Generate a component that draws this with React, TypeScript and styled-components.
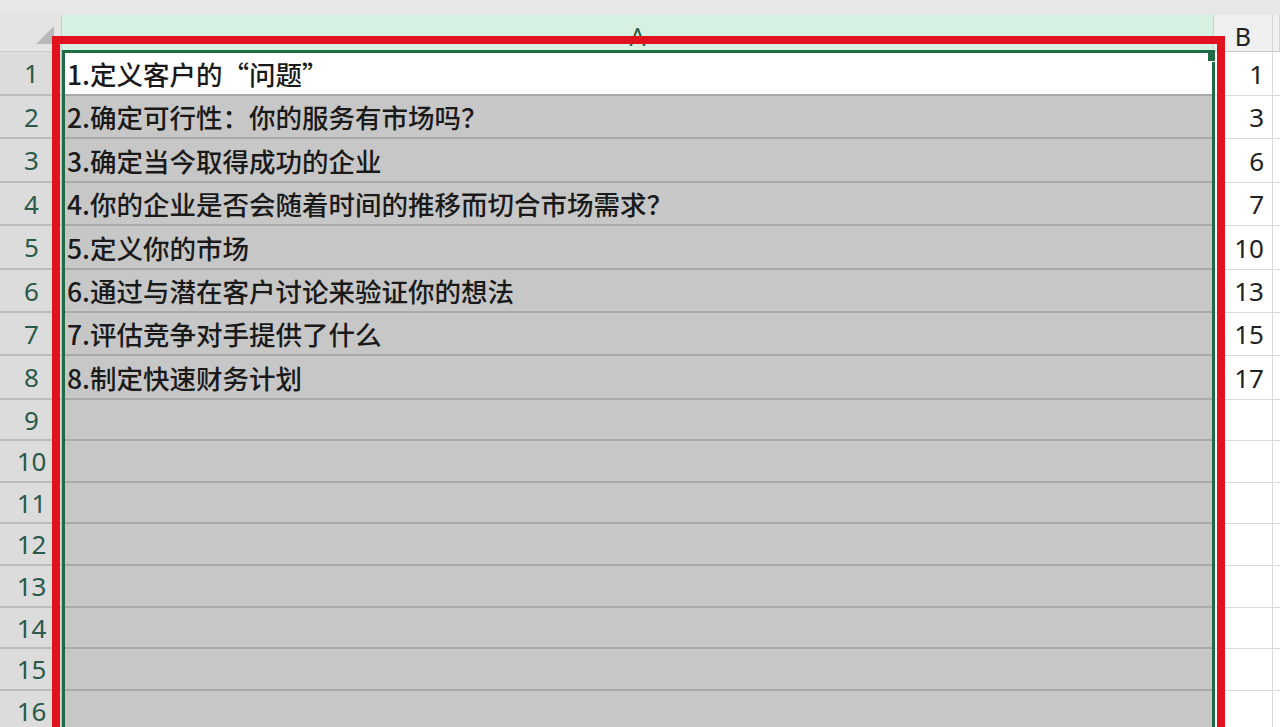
import React from "react";
import styled, { createGlobalStyle } from "styled-components";

const GlobalStyle = createGlobalStyle`
  html, body {
    margin: 0;
    padding: 0;
    background: #f2f2f2;
    overflow: hidden;
  }
  * {
    box-sizing: border-box;
  }
`;

const items = [
  "1.定义客户的“问题”",
  "2.确定可行性：你的服务有市场吗？",
  "3.确定当今取得成功的企业",
  "4.你的企业是否会随着时间的推移而切合市场需求？",
  "5.定义你的市场",
  "6.通过与潜在客户讨论来验证你的想法",
  "7.评估竞争对手提供了什么",
  "8.制定快速财务计划",
];

const pages = ["1", "3", "6", "7", "10", "13", "15", "17"];

const rowHeights = [44, 43, 44, 43, 44, 43, 43, 44, 41, 42, 41, 42, 42, 41, 42, 42];

const Sheet = styled.div`
  position: relative;
  width: 1280px;
  height: 727px;
  overflow: hidden;
  font-family: "Noto Sans", "Noto Sans CJK SC", sans-serif;
`;

const TopStrip = styled.div`
  height: 15px;
  background: #e7e7e7;
`;

const Grid = styled.div`
  display: grid;
  grid-template-columns: 62px 1152px 59px 1fr;
  grid-template-rows: 37px;
  grid-auto-rows: auto;
`;

const Corner = styled.div`
  position: relative;
  background: #e4e4e4;
  border-right: 1px solid #c9c9c9;
  border-bottom: 1px solid #c9c9c9;
`;

const CornerMark = styled.div`
  position: absolute;
  right: 7px;
  bottom: 7px;
  width: 0;
  height: 0;
  border-left: 18px solid transparent;
  border-bottom: 18px solid #b9b9b9;
`;

const ColHead = styled.div<{ $active?: boolean }>`
  display: flex;
  align-items: center;
  justify-content: center;
  background: ${(p) => (p.$active ? "#d6f0e1" : "#f0f0f0")};
  color: ${(p) => (p.$active ? "#1f5b40" : "#222222")};
  border-right: 1px solid ${(p) => (p.$active ? "#c4d6cb" : "#d4d4d4")};
  border-bottom: 1px solid #c9c9c9;
  font-size: 25px;
  padding-top: 6px;
`;

const RowHead = styled.div<{ $h: number }>`
  height: ${(p) => p.$h}px;
  display: flex;
  align-items: center;
  justify-content: center;
  background: #dcdcdc;
  color: #2a5a49;
  font-size: 26px;
  border-right: 1px solid #c2c2c2;
  border-bottom: 2px solid #bdbdbd;
  padding-left: 2px;
`;

const CellA = styled.div<{ $h: number; $active?: boolean }>`
  height: ${(p) => p.$h}px;
  display: flex;
  align-items: center;
  padding-left: 5px;
  background: ${(p) => (p.$active ? "#ffffff" : "#c7c7c7")};
  border-bottom: 2px solid #a9a9a9;
  color: #1a1a1a;
  font-family: "Noto Sans CJK SC", "Noto Sans", sans-serif;
  font-size: 26.5px;
  font-weight: 500;
  white-space: nowrap;
`;

const CellNum = styled.div<{ $h: number }>`
  height: ${(p) => p.$h}px;
  display: flex;
  align-items: center;
  justify-content: flex-end;
  padding-right: 8px;
  background: #ffffff;
  border-right: 1px solid #d9d9d9;
  border-bottom: 1px solid #d9d9d9;
  color: #222222;
  font-size: 26px;
`;

const CellEmpty = styled.div<{ $h: number }>`
  height: ${(p) => p.$h}px;
  background: #ffffff;
  border-bottom: 1px solid #d9d9d9;
`;

const Selection = styled.div`
  position: absolute;
  left: 62px;
  top: 50px;
  width: 1153px;
  height: 720px;
  border: 3px solid #1f6b44;
  pointer-events: none;
`;

const FillHandle = styled.div`
  position: absolute;
  right: -3px;
  top: 0px;
  width: 8px;
  height: 9px;
  background: #1f6b44;
  border-left: 1px solid #ffffff;
  border-bottom: 1px solid #ffffff;
`;

const Annotation = styled.div`
  position: absolute;
  left: 52px;
  top: 36px;
  width: 1173px;
  height: 740px;
  border: 8px solid #e1121d;
  pointer-events: none;
`;

export default function App() {
  return (
    <>
      <GlobalStyle />
      <Sheet>
        <TopStrip />
        <Grid>
          <Corner>
            <CornerMark />
          </Corner>
          <ColHead $active>A</ColHead>
          <ColHead>B</ColHead>
          <ColHead />
          {rowHeights.map((h, i) => (
            <React.Fragment key={i}>
              <RowHead $h={h}>{i + 1}</RowHead>
              <CellA $h={h} $active={i === 0}>
                {items[i] ?? ""}
              </CellA>
              <CellNum $h={h}>{pages[i] ?? ""}</CellNum>
              <CellEmpty $h={h} />
            </React.Fragment>
          ))}
        </Grid>
        <Selection>
          <FillHandle />
        </Selection>
        <Annotation />
      </Sheet>
    </>
  );
}
